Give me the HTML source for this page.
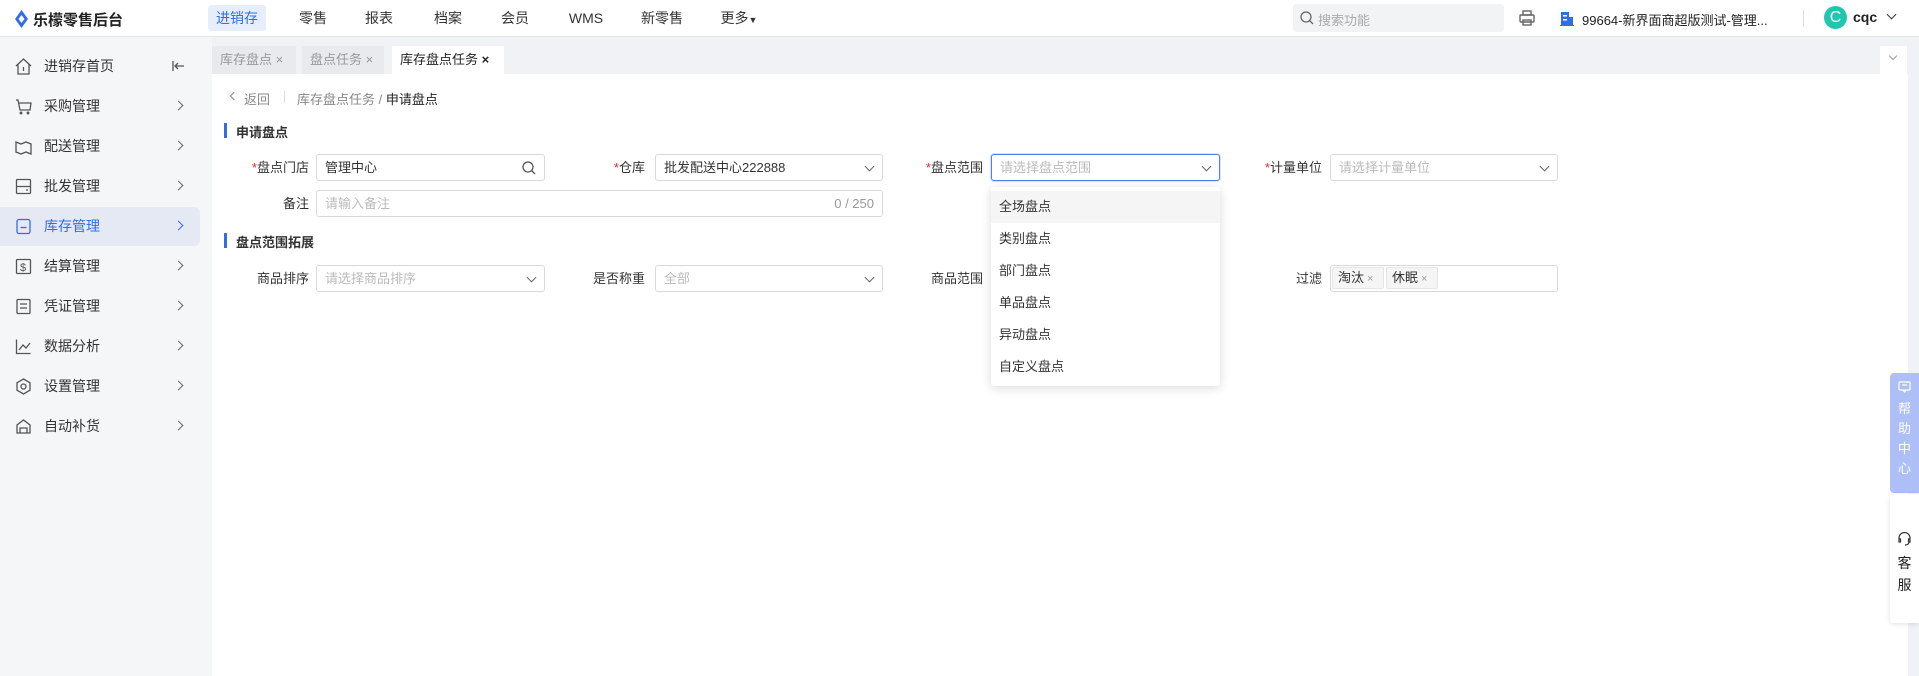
<!DOCTYPE html>
<html><head><meta charset="utf-8"><style>
*{margin:0;padding:0;box-sizing:border-box}
body{width:1919px;height:676px;position:relative;overflow:hidden;background:#f0f2f5;font-family:"Liberation Sans","Noto Sans CJK SC",sans-serif;color:#333;font-size:13px}
.a{position:absolute}
.hdr{left:0;top:0;width:1919px;height:37px;background:#fff;border-bottom:1px solid #e3e5e8}
.nav{top:5px;height:26px;line-height:26px;font-size:14px;color:#333;transform:translateX(-50%)}
.side{left:0;top:37px;width:212px;height:639px;background:#f5f6f8}
.mi{left:0;width:200px;height:40px;line-height:40px;font-size:14px;color:#333}
.mi .t{position:absolute;left:44px}
.mi .c{position:absolute;left:175px;top:16px;width:7px;height:7px;border-right:1.3px solid #666;border-top:1.3px solid #666;transform:rotate(45deg)}
.mi svg{position:absolute;left:15px;top:12px}
.tab{top:46px;height:28px;line-height:28px;background:#e8eaee;color:#999;padding-left:8px;font-size:13px}
.content{left:212px;top:74px;width:1696px;height:602px;background:#fff}
.lbl{height:27px;line-height:27px;text-align:right;font-size:13px;color:#333}
.lbl i{color:#f5222d;font-style:normal}
.inp{height:27px;border:1px solid #d9d9d9;border-radius:3px;background:#fff;line-height:25px;padding-left:8px;font-size:13px}
.ph{color:#bbb}
.chev{position:absolute;right:9px;top:8px;width:7px;height:7px;border-right:1.3px solid #666;border-bottom:1.3px solid #666;transform:rotate(45deg)}
.sec{font-weight:bold;font-size:13px}
.dd{left:991px;top:187px;width:229px;height:199px;background:#fff;box-shadow:0 2px 10px rgba(0,0,0,.15);border-radius:3px}
.di{position:absolute;left:0;width:229px;height:32px;line-height:32px;padding-left:8px;font-size:13px;color:#333}
.tag{top:267px;height:22px;line-height:20px;background:#f5f5f5;border:1px solid #e6e6e6;border-radius:2px;padding-left:5px;font-size:13px}
.tag span{color:#999;font-size:11px;margin-left:3px}
</style></head><body>
<div class="a hdr"></div>
<svg class="a" style="left:15px;top:10px" width="13" height="18" viewBox="0 0 13 18"><path d="M6.5 0L13 9 6.5 18 0 9z" fill="#2f6ee8"/><path d="M6.5 5L9.5 9 6.5 13 3.5 9z" fill="#fff"/></svg>
<div class="a" style="left:33px;top:9px;font-size:15px;font-weight:bold;color:#222">乐檬零售后台</div>
<div class="a" style="left:208px;top:5px;width:58px;height:26px;background:#e6edfb;border-radius:3px"></div>
<div class="a nav" style="left:237px;color:#2f6ee8">进销存</div>
<div class="a nav" style="left:313px">零售</div>
<div class="a nav" style="left:379px">报表</div>
<div class="a nav" style="left:448px">档案</div>
<div class="a nav" style="left:515px">会员</div>
<div class="a nav" style="left:586px">WMS</div>
<div class="a nav" style="left:662px">新零售</div>
<div class="a nav" style="left:739px">更多<span style="font-size:9px">▼</span></div>
<div class="a" style="left:1293px;top:4px;width:211px;height:28px;background:#f2f3f5;border-radius:3px"></div>
<svg class="a" style="left:1300px;top:11px" width="14" height="14"><circle cx="6" cy="6" r="5" fill="none" stroke="#666" stroke-width="1.3"/><path d="M9.5 9.5L13 13" stroke="#666" stroke-width="1.3"/></svg>
<div class="a" style="left:1318px;top:10px;color:#aaa;font-size:13px">搜索功能</div>
<svg class="a" style="left:1518px;top:9px" width="18" height="18" viewBox="0 0 18 18" fill="none" stroke="#666" stroke-width="1.4"><rect x="5" y="2" width="8" height="4"/><rect x="2" y="6" width="14" height="7" rx="1"/><rect x="5" y="11" width="8" height="5"/></svg>
<svg class="a" style="left:1560px;top:11px" width="14" height="15"><rect x="1" y="1" width="8" height="13" fill="#2f6ee8"/><rect x="9" y="6" width="4" height="8" fill="#2f6ee8"/><rect x="3" y="4" width="4" height="1.5" fill="#fff"/><rect x="3" y="8" width="4" height="1.5" fill="#fff"/><rect x="0" y="14" width="14" height="1.3" fill="#2f6ee8"/></svg>
<div class="a" style="left:1582px;top:10px;font-size:13px;color:#222">99664-新界面商超版测试-管理...</div>
<div class="a" style="left:1803px;top:10px;width:1px;height:17px;background:#ddd"></div>
<div class="a" style="left:1824px;top:6px;width:23px;height:23px;border-radius:50%;background:#1ec8b0;color:#fff;text-align:center;line-height:23px;font-size:16px">C</div>
<div class="a" style="left:1853px;top:9px;font-size:14px;font-weight:bold;color:#222">cqc</div>
<div class="a" style="left:1888px;top:11px;width:7px;height:7px;border-right:1.5px solid #333;border-bottom:1.5px solid #333;transform:rotate(45deg)"></div>

<div class="a side"></div>
<div class="a" style="left:0;top:207px;width:200px;height:39px;background:#e4e9f4;border-radius:0 6px 6px 0"></div>
<div class="a mi" style="top:46px"><svg width="17" height="17" viewBox="0 0 17 17" fill="none" stroke="#555" stroke-width="1.3"><path d="M1 8L8.5 1 16 8M3 6.5V16H14V6.5M8.5 9v4"/></svg><span class="t">进销存首页</span><svg style="left:172px;top:14px" width="13" height="12" viewBox="0 0 13 12" fill="none" stroke="#555" stroke-width="1.3"><path d="M1 1v10M12 6H3M6 3L3 6l3 3"/></svg></div>
<div class="a mi" style="top:86px"><svg width="17" height="17" viewBox="0 0 17 17" fill="none" stroke="#555" stroke-width="1.3"><path d="M1 2h2l2 10h10l1-7H4"/><circle cx="6" cy="15" r=".8"/><circle cx="13" cy="15" r=".8"/></svg><span class="t">采购管理</span><span class="c"></span></div>
<div class="a mi" style="top:126px"><svg width="17" height="17" viewBox="0 0 17 17" fill="none" stroke="#555" stroke-width="1.3"><path d="M1 4l5 2 5-2 5 2v10l-5-2-5 2-5-2z"/></svg><span class="t">配送管理</span><span class="c"></span></div>
<div class="a mi" style="top:166px"><svg width="17" height="17" viewBox="0 0 17 17" fill="none" stroke="#555" stroke-width="1.3"><rect x="1.5" y="1.5" width="14" height="14" rx="1"/><path d="M1.5 8.5h14M11 12h2"/></svg><span class="t">批发管理</span><span class="c"></span></div>
<div class="a mi" style="top:206px;color:#2f6ee8"><svg width="17" height="17" viewBox="0 0 17 17" fill="none" stroke="#2f6ee8" stroke-width="1.3"><rect x="2" y="1.5" width="13" height="14" rx="2"/><path d="M5.5 9.5h6"/></svg><span class="t">库存管理</span><span class="c" style="border-color:#2f6ee8"></span></div>
<div class="a mi" style="top:246px"><svg width="17" height="17" viewBox="0 0 17 17" fill="none" stroke="#555" stroke-width="1.3"><rect x="1.5" y="1.5" width="14" height="14" rx="1"/><text x="5" y="13" font-size="11" fill="#555" stroke="none">$</text></svg><span class="t">结算管理</span><span class="c"></span></div>
<div class="a mi" style="top:286px"><svg width="17" height="17" viewBox="0 0 17 17" fill="none" stroke="#555" stroke-width="1.3"><rect x="2" y="1.5" width="13" height="14" rx="1"/><path d="M5 6h7M5 10h7"/></svg><span class="t">凭证管理</span><span class="c"></span></div>
<div class="a mi" style="top:326px"><svg width="17" height="17" viewBox="0 0 17 17" fill="none" stroke="#555" stroke-width="1.3"><path d="M1.5 1.5v14h14M4 12l4-5 3 3 4-5"/></svg><span class="t">数据分析</span><span class="c"></span></div>
<div class="a mi" style="top:366px"><svg width="17" height="17" viewBox="0 0 17 17" fill="none" stroke="#555" stroke-width="1.3"><path d="M8.5 1l6.5 3.75v7.5L8.5 16 2 12.25v-7.5z"/><circle cx="8.5" cy="8.5" r="2.5"/></svg><span class="t">设置管理</span><span class="c"></span></div>
<div class="a mi" style="top:406px"><svg width="17" height="17" viewBox="0 0 17 17" fill="none" stroke="#555" stroke-width="1.3"><path d="M2 15V7l6.5-5L15 7v8zM5 15v-5h7v5"/></svg><span class="t">自动补货</span><span class="c"></span></div>

<div class="a tab" style="left:212px;width:84px">库存盘点 ×</div>
<div class="a tab" style="left:302px;width:82px">盘点任务 ×</div>
<div class="a tab" style="left:392px;width:112px;background:#fff;color:#222">库存盘点任务 <b>×</b></div>
<div class="a" style="left:1880px;top:46px;width:27px;height:28px;background:#fff"></div>
<div class="a" style="left:1890px;top:53px;width:6px;height:6px;border-right:1px solid #999;border-bottom:1px solid #999;transform:rotate(45deg)"></div>

<div class="a content"></div>
<div class="a" style="left:231px;top:93px;width:6px;height:6px;border-left:1.2px solid #888;border-bottom:1.2px solid #888;transform:rotate(45deg)"></div>
<div class="a" style="left:244px;top:89px;color:#888">返回</div>
<div class="a" style="left:284px;top:91px;width:1px;height:12px;background:#ddd"></div>
<div class="a" style="left:297px;top:89px;color:#888">库存盘点任务 <span style="color:#888">/</span> <span style="color:#222">申请盘点</span></div>

<div class="a" style="left:224px;top:123px;width:3px;height:15px;background:#2f6ee8"></div>
<div class="a sec" style="left:236px;top:122px">申请盘点</div>
<div class="a" style="left:224px;top:233px;width:3px;height:15px;background:#2f6ee8"></div>
<div class="a sec" style="left:236px;top:232px">盘点范围拓展</div>

<div class="a lbl" style="left:220px;width:89px;top:154px"><i>*</i>盘点门店</div>
<div class="a inp" style="left:316px;top:154px;width:229px">管理中心<svg style="position:absolute;right:8px;top:6px" width="14" height="14"><circle cx="6" cy="6" r="5" fill="none" stroke="#555" stroke-width="1.3"/><path d="M9.5 9.5L13 13" stroke="#555" stroke-width="1.3"/></svg></div>
<div class="a lbl" style="left:560px;width:85px;top:154px"><i>*</i>仓库</div>
<div class="a inp" style="left:655px;top:154px;width:228px">批发配送中心222888<span class="chev"></span></div>
<div class="a lbl" style="left:895px;width:88px;top:154px"><i>*</i>盘点范围</div>
<div class="a inp" style="left:991px;top:154px;width:229px;border-color:#4a82f0;box-shadow:0 0 0 1px #d6e3fc"><span class="ph">请选择盘点范围</span><span class="chev"></span></div>
<div class="a lbl" style="left:1230px;width:92px;top:154px"><i>*</i>计量单位</div>
<div class="a inp" style="left:1330px;top:154px;width:228px"><span class="ph">请选择计量单位</span><span class="chev"></span></div>

<div class="a lbl" style="left:220px;width:89px;top:190px">备注</div>
<div class="a inp" style="left:316px;top:190px;width:567px"><span class="ph">请输入备注</span><span style="position:absolute;right:8px;color:#999">0 / 250</span></div>

<div class="a lbl" style="left:220px;width:89px;top:265px">商品排序</div>
<div class="a inp" style="left:316px;top:265px;width:229px"><span class="ph">请选择商品排序</span><span class="chev"></span></div>
<div class="a lbl" style="left:560px;width:85px;top:265px">是否称重</div>
<div class="a inp" style="left:655px;top:265px;width:228px"><span class="ph">全部</span><span class="chev"></span></div>
<div class="a lbl" style="left:895px;width:88px;top:265px">商品范围</div>
<div class="a lbl" style="left:1230px;width:92px;top:265px">过滤</div>
<div class="a inp" style="left:1330px;top:265px;width:228px"></div>
<div class="a tag" style="left:1332px;width:52px">淘汰<span>×</span></div>
<div class="a tag" style="left:1386px;width:52px">休眠<span>×</span></div>

<div class="a dd">
<div class="di" style="top:4px;background:#f5f5f5">全场盘点</div>
<div class="di" style="top:36px">类别盘点</div>
<div class="di" style="top:68px">部门盘点</div>
<div class="di" style="top:100px">单品盘点</div>
<div class="di" style="top:132px">异动盘点</div>
<div class="di" style="top:164px">自定义盘点</div>
</div>

<div class="a" style="left:1890px;top:373px;width:29px;height:120px;background:#aebff8;border-radius:4px 0 0 4px;color:#fff;text-align:center;font-size:13px;line-height:20px;padding-top:6px">
<svg width="13" height="12" viewBox="0 0 13 12" fill="none" stroke="#fff" stroke-width="1.2"><rect x="1" y="1" width="11" height="8" rx="1"/><path d="M4 4h5M5 9l1.5 2 1.5-2"/></svg><br>帮<br>助<br>中<br>心</div>
<div class="a" style="left:1890px;top:494px;width:29px;height:129px;background:#fff;border-radius:4px 0 0 4px;box-shadow:0 1px 6px rgba(0,0,0,.12);text-align:center;font-size:14px;line-height:22px;padding-top:36px;color:#222">
<svg width="15" height="14" viewBox="0 0 15 14" fill="none" stroke="#333" stroke-width="1.2"><path d="M2 8V6a5.5 5.5 0 0111 0v2M2 7h1.5v3H2zM11.5 7H13v3h-1.5zM12 10c0 2-2 3-4 3"/></svg><br>客<br>服</div>
</body></html>
